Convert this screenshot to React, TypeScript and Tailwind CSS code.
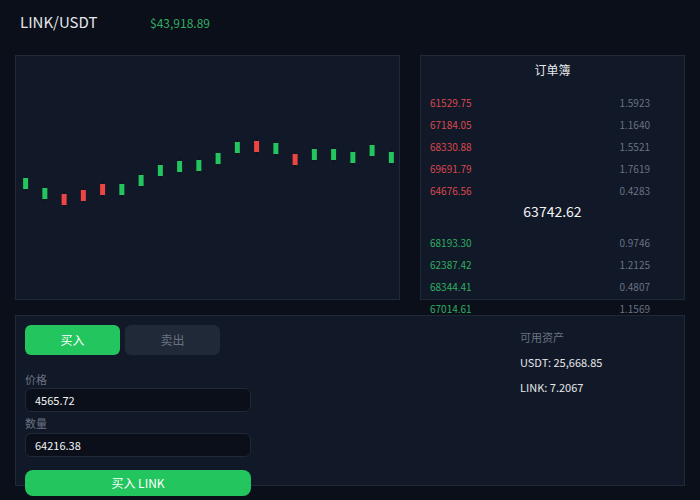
import React from 'react';

const asks = [
  { price: '61529.75', size: '1.5923' },
  { price: '67184.05', size: '1.1640' },
  { price: '68330.88', size: '1.5521' },
  { price: '69691.79', size: '1.7619' },
  { price: '64676.56', size: '0.4283' },
];

const bids = [
  { price: '68193.30', size: '0.9746' },
  { price: '62387.42', size: '1.2125' },
  { price: '68344.41', size: '0.4807' },
  { price: '67014.61', size: '1.1569' },
];

// top of each candle body in chart coords, and whether it closed up
const candles: { top: number; up: boolean }[] = [
  { top: 122, up: true },
  { top: 132, up: true },
  { top: 138, up: false },
  { top: 134, up: false },
  { top: 128, up: false },
  { top: 128, up: true },
  { top: 119, up: true },
  { top: 109, up: true },
  { top: 105, up: true },
  { top: 104, up: true },
  { top: 97, up: true },
  { top: 86, up: true },
  { top: 85, up: false },
  { top: 87, up: true },
  { top: 98, up: false },
  { top: 93, up: true },
  { top: 93, up: true },
  { top: 96, up: true },
  { top: 89, up: true },
  { top: 96, up: true },
];

const CandleChart: React.FC = () => (
  <svg width="385" height="245" viewBox="0 0 385 245" className="block">
    {candles.map((c, i) => {
      const cx = 9.6 + i * 19.25;
      const color = c.up ? '#22c55e' : '#ef4444';
      return (
        <g key={i}>
          <line x1={cx} x2={cx} y1={c.top - 3} y2={c.top + 14} stroke="#0c111c" strokeWidth="1" />
          <rect x={cx - 2.5} y={c.top} width="5" height="11" fill={color} />
        </g>
      );
    })}
  </svg>
);

export default function App() {
  return (
    <div className="w-[700px] h-[500px] overflow-hidden bg-[#0b0f19] text-gray-200 font-['Noto_Sans_CJK_SC','Noto_Sans',sans-serif]">
      <div className="h-[45px] flex items-center pl-[20px]">
        <div className="w-[130px] text-[15px] text-gray-200">LINK/USDT</div>
        <div className="text-[12px] text-[#2fae62]">$43,918.89</div>
      </div>

      <div className="mt-[10px] flex gap-[20px] pl-[15px]">
        <div className="w-[385px] h-[245px] bg-[#111827] border border-[#1f2937] overflow-hidden">
          <CandleChart />
        </div>

        <div className="w-[265px] h-[245px] bg-[#111827] border border-[#1f2937]">
          <div className="pt-[5px] text-center text-[12px] leading-[18px] text-gray-200">订单簿</div>
          <div className="mt-[13px]">
            {asks.map((r) => (
              <div key={r.price} className="flex justify-between pl-[9px] pr-[34px] text-[10px] leading-[22px]">
                <span className="text-[#d9484f]">{r.price}</span>
                <span className="text-gray-500">{r.size}</span>
              </div>
            ))}
          </div>
          <div className="text-center text-[14px] leading-[18px] text-gray-100 mb-[12px]">63742.62</div>
          <div>
            {bids.map((r) => (
              <div key={r.price} className="flex justify-between pl-[9px] pr-[34px] text-[10px] leading-[22px]">
                <span className="text-[#2fae62]">{r.price}</span>
                <span className="text-gray-500">{r.size}</span>
              </div>
            ))}
          </div>
        </div>
      </div>

      <div className="mt-[15px] ml-[15px] w-[670px] h-[171px] bg-[#111827] border border-[#1f2937] flex px-[9px] pt-[9px]">
        <div className="w-[226px]">
          <div className="flex gap-[5px]">
            <button className="w-[95px] h-[30px] rounded-md bg-[#22c55e] text-white text-[12px]">买入</button>
            <button className="w-[95px] h-[30px] rounded-md bg-[#1f2937] text-gray-500 text-[12px]">卖出</button>
          </div>
          <div className="mt-[16px] text-[11px] leading-[16px] text-gray-500">价格</div>
          <div className="mt-[1px] h-[24px] rounded-md bg-[#0b0f19] border border-[#1f2937] flex items-center px-[9px] text-[11px] text-gray-100">
            4565.72
          </div>
          <div className="mt-[3px] text-[11px] leading-[16px] text-gray-500">数量</div>
          <div className="mt-[2px] h-[24px] rounded-md bg-[#0b0f19] border border-[#1f2937] flex items-center px-[9px] text-[11px] text-gray-100">
            64216.38
          </div>
          <button className="mt-[13px] w-full h-[26px] rounded-lg bg-[#22c55e] text-white text-[12px]">买入 LINK</button>
        </div>

        <div className="ml-[269px] text-[11px]">
          <div className="h-[25px] flex items-center text-gray-500">可用资产</div>
          <div className="h-[25px] flex items-center text-gray-200">USDT: 25,668.85</div>
          <div className="h-[25px] flex items-center text-gray-200">LINK: 7.2067</div>
        </div>
      </div>
    </div>
  );
}
